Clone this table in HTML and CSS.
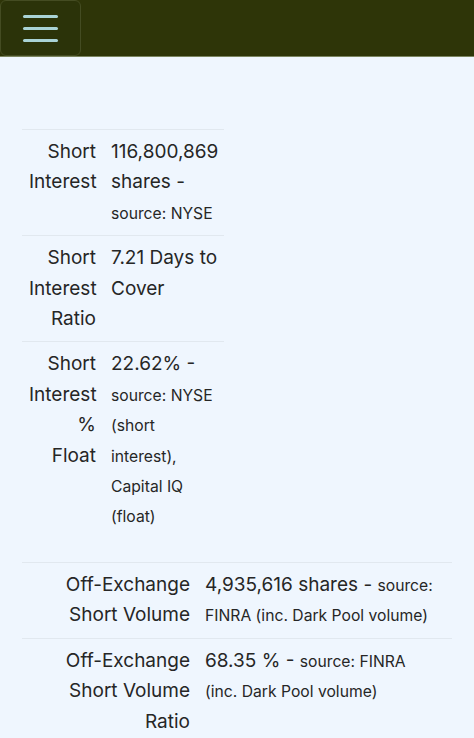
FILE: index.html
```html
<!DOCTYPE html>
<html>
<head>
<meta charset="utf-8">
<link rel="stylesheet" href="styles.css">
</head>
<body>
<header class="topbar">
  <button class="menu-btn" aria-label="Menu">
    <span class="bar"></span><span class="bar"></span><span class="bar"></span>
  </button>
</header>
<main class="content">
  <table class="stats stats-narrow">
    <tr>
      <th>Short Interest</th>
      <td>116,800,869 shares - <span class="src">source: NYSE</span></td>
    </tr>
    <tr>
      <th>Short Interest Ratio</th>
      <td>7.21 Days to Cover</td>
    </tr>
    <tr>
      <th>Short Interest % Float</th>
      <td>22.62% - <span class="src">source: NYSE (short interest), Capital IQ (float)</span></td>
    </tr>
  </table>
  <table class="stats stats-wide">
    <tr>
      <th>Off-Exchange Short Volume</th>
      <td>4,935,616 shares - <span class="src">source: FINRA (inc. Dark Pool volume)</span></td>
    </tr>
    <tr>
      <th>Off-Exchange Short Volume Ratio</th>
      <td>68.35 % - <span class="src">source: FINRA (inc. Dark Pool volume)</span></td>
    </tr>
  </table>
</main>
</body>
</html>
```
FILE: styles.css
```css
html, body {
  margin: 0;
  padding: 0;
}
body {
  background: #eff6fe;
  font-family: Inter, "Noto Sans", sans-serif;
  color: #262626;
}
.topbar {
  height: 56px;
  background: #2e3508;
  border-bottom: 1px solid #7b8560;
}
.menu-btn {
  display: flex;
  flex-direction: column;
  justify-content: center;
  align-items: center;
  gap: 9px;
  width: 81px;
  height: 56px;
  margin: 0;
  padding: 0;
  background: #2b3309;
  border: 1px solid #444c22;
  border-radius: 6px;
}
.bar {
  display: block;
  width: 35px;
  height: 3px;
  border-radius: 2px;
  background: #a9d3d6;
}
.content {
  padding: 72px 22px 0 22px;
}
.stats {
  border-collapse: collapse;
  table-layout: fixed;
  font-size: 19px;
  line-height: 30.4px;
}
.stats tr {
  border-top: 1px solid #e1e8ef;
}
.stats th {
  font-weight: 400;
  text-align: right;
  vertical-align: top;
  padding: 7px 7px 7px 7px;
}
.stats td {
  text-align: left;
  vertical-align: top;
  padding: 7px 5px 7px 8px;
}
.src {
  font-size: 15.7px;
  line-height: 20px;
}
.stats-narrow {
  width: 202px;
}
.stats-narrow th {
  width: 67px;
}
.stats-wide {
  width: 430px;
  margin-top: 23px;
}
.stats-wide th {
  width: 161px;
}
.stats-wide td {
  padding-right: 15px;
}
```
